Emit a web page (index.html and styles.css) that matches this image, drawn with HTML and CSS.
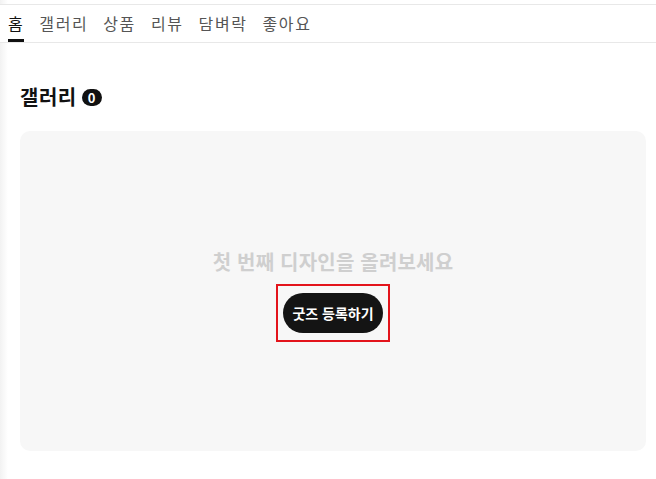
FILE: index.html
```html
<!DOCTYPE html>
<html lang="ko">
<head>
<meta charset="utf-8">
<link rel="stylesheet" href="styles.css">
</head>
<body>
<div class="page">
  <nav class="tabs">
    <a class="tab active">홈</a>
    <a class="tab">갤러리</a>
    <a class="tab">상품</a>
    <a class="tab">리뷰</a>
    <a class="tab">담벼락</a>
    <a class="tab">좋아요</a>
  </nav>
  <section class="gallery">
    <h2 class="title">갤러리<span class="badge">0</span></h2>
    <div class="empty">
      <p class="empty-text">첫 번째 디자인을 올려보세요</p>
      <span class="highlight"><button class="btn">굿즈 등록하기</button></span>
    </div>
  </section>
</div>
</body>
</html>
```
FILE: styles.css
```css
html, body {
  margin: 0;
  padding: 0;
  background: #fff;
}
body {
  font-family: "Noto Sans CJK KR", "Noto Sans", sans-serif;
  color: #111;
  background: linear-gradient(to right, #f2f2f2 0, #fff 8px);
  min-height: 479px;
}
.page {
  padding-top: 4px;
}
.tabs {
  display: flex;
  gap: 15px;
  padding: 0 8px;
  border-top: 1px solid #e8e8e8;
  border-bottom: 1px solid #e8e8e8;
  background: #fff;
  height: 37px;
}
.tab {
  display: flex;
  align-items: center;
  font-size: 16px;
  line-height: 1;
  letter-spacing: 1.6px;
  color: #555;
  box-sizing: border-box;
  padding-top: 1px;
  border-bottom: 3px solid transparent;
}
.tab.active {
  color: #111;
  border-bottom-color: #111;
}
.gallery {
  padding: 0 10px 0 20px;
}
.title {
  display: flex;
  align-items: center;
  gap: 5px;
  margin: 40px 0 0;
  font-size: 20px;
  line-height: 28px;
  font-weight: 700;
  height: 28px;
  letter-spacing: 0.5px;
}
.badge {
  display: inline-flex;
  align-items: center;
  justify-content: center;
  background: #111;
  color: #fff;
  font-size: 13px;
  font-weight: 700;
  line-height: 1;
  height: 17px;
  min-width: 20px;
  border-radius: 9px;
  margin-top: 1px;
  letter-spacing: 0;
}
.empty {
  margin-top: 20px;
  height: 320px;
  box-sizing: border-box;
  padding-top: 11px;
  background: #f7f7f7;
  border-radius: 10px;
  display: flex;
  flex-direction: column;
  align-items: center;
  justify-content: center;
}
.empty-text {
  margin: 0 0 11px;
  font-size: 20px;
  font-weight: 700;
  color: #cfcfcf;
  line-height: 22px;
  letter-spacing: 0.2px;
}
.highlight {
  display: inline-block;
  border: 2px solid #e3141b;
  padding: 7px 5px;
}
.btn {
  display: block;
  border: 0;
  background: #141414;
  color: #fff;
  font-family: inherit;
  font-size: 14px;
  font-weight: 700;
  height: 40px;
  width: 100px;
  border-radius: 20px;
  padding: 0;
}
```
